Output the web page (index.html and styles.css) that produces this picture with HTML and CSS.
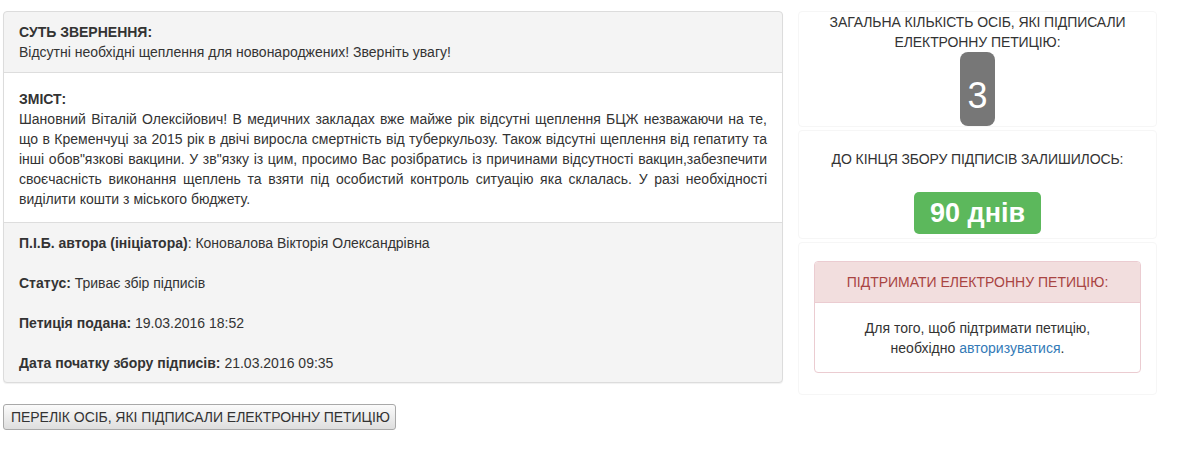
FILE: index.html
```html
<!DOCTYPE html>
<html lang="uk">
<head>
<meta charset="utf-8">
<title>Петиція</title>
<link rel="stylesheet" href="styles.css">
</head>
<body>
<div class="page">
  <div class="main-col">
    <div class="petition">
      <div class="sec sec-head">
        <strong>СУТЬ ЗВЕРНЕННЯ:</strong><br>
        Відсутні необхідні щеплення для новонароджених! Зверніть увагу!
      </div>
      <div class="sec sec-body">
        <strong>ЗМІСТ:</strong><br>
        Шановний Віталій Олексійович! В медичних закладах вже майже рік відсутні щеплення БЦЖ незважаючи на те, що в Кременчуці за 2015 рік в двічі виросла смертність від туберкульозу. Також відсутні щеплення від гепатиту та інші обов"язкові вакцини. У зв"язку із цим, просимо Вас розібратись із причинами відсутності вакцин,забезпечити своєчасність виконання щеплень та взяти під особистий контроль ситуацію яка склалась. У разі необхідності виділити кошти з міського бюджету.
      </div>
      <div class="sec sec-meta">
        <p><strong>П.І.Б. автора (ініціатора)</strong>: Коновалова Вікторія Олександрівна</p>
        <p><strong>Статус:</strong> Триває збір підписів</p>
        <p><strong>Петиція подана:</strong> 19.03.2016 18:52</p>
        <p><strong>Дата початку збору підписів:</strong> 21.03.2016 09:35</p>
      </div>
    </div>
    <button class="list-btn" type="button">ПЕРЕЛІК ОСІБ, ЯКІ ПІДПИСАЛИ ЕЛЕКТРОННУ ПЕТИЦІЮ</button>
  </div>
  <div class="side-col">
    <div class="well well-count">
      <div class="well-title">ЗАГАЛЬНА КІЛЬКІСТЬ ОСІБ, ЯКІ ПІДПИСАЛИ ЕЛЕКТРОННУ ПЕТИЦІЮ:</div>
      <div class="badge-row"><span class="badge-count">3</span></div>
    </div>
    <div class="well well-days">
      <div class="well-title">ДО КІНЦЯ ЗБОРУ ПІДПИСІВ ЗАЛИШИЛОСЬ:</div>
      <div class="badge-row"><span class="badge-days">90 днів</span></div>
    </div>
    <div class="well well-support">
      <div class="panel-danger">
        <div class="panel-heading">ПІДТРИМАТИ ЕЛЕКТРОННУ ПЕТИЦІЮ:</div>
        <div class="panel-body">Для того, щоб підтримати петицію,<br>необхідно <a href="#" class="link">авторизуватися</a>.</div>
      </div>
    </div>
  </div>
</div>
</body>
</html>
```

FILE: styles.css
```css
* { box-sizing: border-box; }

body {
  margin: 0;
  background: #fff;
  font-family: "Liberation Sans", Arial, Helvetica, sans-serif;
  font-size: 14px;
  line-height: 20px;
  color: #333;
}

.page {
  display: flex;
  align-items: flex-start;
  gap: 15px;
  padding: 11px 0 0 3px;
}

.main-col {
  width: 780px;
  flex: none;
}

.petition {
  background: #f4f4f4;
  border: 1px solid #dcdcdc;
  border-radius: 4px;
  box-shadow: 0 1px 1px rgba(0, 0, 0, 0.06);
  overflow: hidden;
}

.sec {
  padding: 10px 15px;
  border-bottom: 1px solid #ddd;
}

.sec-body {
  background: #fff;
  padding: 16px 15px 13px;
  text-align: justify;
}

.sec-meta {
  border-bottom: 0;
  padding: 10px 15px 9px;
}

.sec-meta p {
  margin: 0 0 20px;
}

.sec-meta p:last-child {
  margin-bottom: 0;
}

.list-btn {
  display: block;
  margin-top: 21px;
  height: 26px;
  padding: 0 5px 0 7px;
  font-family: "Liberation Sans", Arial, Helvetica, sans-serif;
  font-size: 14px;
  letter-spacing: -0.05px;
  color: #333;
  background: linear-gradient(#fbfbfb, #dedede);
  border: 1px solid #a9a9a9;
  border-radius: 3px;
}

.side-col {
  width: 359px;
  flex: none;
  display: flex;
  flex-direction: column;
  gap: 3px;
}

.well {
  background: #fff;
  border: 1px solid #f6f6f6;
  border-radius: 4px;
  text-align: center;
}

.well-title {
  padding: 0 19px;
  letter-spacing: -0.1px;
}

.badge-row {
  display: flex;
  justify-content: center;
}

.badge-count {
  display: block;
  background: #777;
  color: #fff;
  font-size: 36px;
  line-height: 36px;
  padding: 26px 7px 12px;
  border-radius: 8px;
}

.well-days {
  padding: 18px 0 4px;
}

.well-days .badge-row {
  margin-top: 23px;
}

.badge-days {
  display: block;
  background: #5cb85c;
  color: #fff;
  font-weight: bold;
  font-size: 27px;
  line-height: 42px;
  height: 42px;
  padding: 0 16px;
  border-radius: 5px;
}

.well-support {
  padding: 18px 15px 21px;
}

.panel-danger {
  border: 1px solid #ebccd1;
  border-radius: 4px;
  overflow: hidden;
}

.panel-heading {
  background: #f2dede;
  color: #a94442;
  padding: 10px 15px;
  border-bottom: 1px solid #ebccd1;
}

.panel-body {
  padding: 15px 15px 14px;
}

.link {
  color: #337ab7;
  text-decoration: none;
}
```
